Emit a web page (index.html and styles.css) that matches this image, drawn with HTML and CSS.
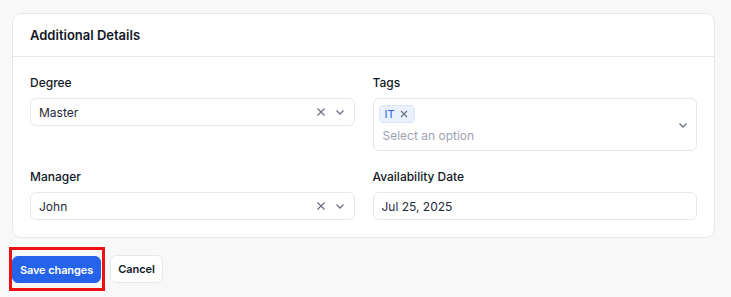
FILE: index.html
```html
<!DOCTYPE html>
<html>
<head>
<meta charset="utf-8">
<title>Additional Details</title>
<link rel="stylesheet" href="styles.css">
</head>
<body>
<div class="page">
    <div class="card">
        <div class="card-head">Additional Details</div>
        <div class="card-body">
            <div class="field">
                <div class="label">Degree</div>
                <div class="select">
                    <span class="value">Master</span>
                    <span class="icons">
                        <svg class="clear" width="10" height="10" viewBox="0 0 10 10"><path d="M1.5 1.5l7 7M8.5 1.5l-7 7" stroke="#6b7280" stroke-width="1.3" fill="none"/></svg>
                        <svg class="chev" width="10" height="10" viewBox="0 0 10 10"><path d="M1.5 3.5l3.5 3.5 3.5-3.5" stroke="#6b7280" stroke-width="1.3" fill="none"/></svg>
                    </span>
                </div>
            </div>
            <div class="field">
                <div class="label">Tags</div>
                <div class="select multi">
                    <div class="multi-inner">
                        <span class="chip">IT <svg width="8" height="8" viewBox="0 0 8 8"><path d="M1 1l6 6M7 1l-6 6" stroke="#6b7280" stroke-width="1.2" fill="none"/></svg></span>
                        <span class="placeholder">Select an option</span>
                    </div>
                    <span class="icons">
                        <svg class="chev" width="10" height="10" viewBox="0 0 10 10"><path d="M1.5 3.5l3.5 3.5 3.5-3.5" stroke="#6b7280" stroke-width="1.3" fill="none"/></svg>
                    </span>
                </div>
            </div>
            <div class="field">
                <div class="label">Manager</div>
                <div class="select">
                    <span class="value">John</span>
                    <span class="icons">
                        <svg class="clear" width="10" height="10" viewBox="0 0 10 10"><path d="M1.5 1.5l7 7M8.5 1.5l-7 7" stroke="#6b7280" stroke-width="1.3" fill="none"/></svg>
                        <svg class="chev" width="10" height="10" viewBox="0 0 10 10"><path d="M1.5 3.5l3.5 3.5 3.5-3.5" stroke="#6b7280" stroke-width="1.3" fill="none"/></svg>
                    </span>
                </div>
            </div>
            <div class="field">
                <div class="label">Availability Date</div>
                <div class="select">
                    <span class="value">Jul 25, 2025</span>
                </div>
            </div>
        </div>
    </div>
    <div class="actions">
        <div class="highlight">
            <button class="btn btn-primary">Save changes</button>
        </div>
        <button class="btn btn-default">Cancel</button>
    </div>
</div>
</body>
</html>
```
FILE: styles.css
```css
* {
    box-sizing: border-box;
}

body {
    margin: 0;
    background: #f8f8f8;
    font-family: Inter, "Noto Sans", sans-serif;
    font-size: 12px;
    color: #1f2937;
}

.page {
    padding: 13px 16px 0 12px;
}

.card {
    background: #fff;
    border: 1px solid #e5e7eb;
    border-radius: 9px;
}

.card-head {
    height: 43px;
    line-height: 42px;
    padding: 0 17px;
    font-size: 13px;
    font-weight: 600;
    color: #111827;
    border-bottom: 1px solid #e5e7eb;
}

.card-body {
    display: grid;
    grid-template-columns: 1fr 1fr;
    column-gap: 18px;
    row-gap: 18px;
    padding: 18px 17px 17px 17px;
}

.field {
    display: flex;
    flex-direction: column;
    gap: 7px;
}

.label {
    font-weight: 500;
    line-height: 16px;
    color: #111827;
}

.select {
    display: flex;
    align-items: center;
    height: 28px;
    padding: 0 9px 0 8px;
    border: 1px solid #e5e7eb;
    border-radius: 6px;
    background: #fff;
}

.select .value {
    flex: 1;
}

.icons {
    display: flex;
    align-items: center;
    gap: 9px;
}

.icons svg {
    display: block;
}

.select.multi {
    height: 53px;
    padding: 5px 8px 5px 5px;
}

.multi-inner {
    flex: 1;
    display: flex;
    flex-direction: column;
    align-items: flex-start;
    gap: 4px;
}

.chip {
    display: inline-flex;
    align-items: center;
    gap: 5px;
    height: 18px;
    padding: 0 6px 0 5px;
    background: #eaf1fe;
    border: 1px solid #dbe6fb;
    border-radius: 4px;
    color: #2563eb;
    font-size: 11px;
}

.placeholder {
    padding-left: 4px;
    line-height: 18px;
    color: #9ca3af;
}

.actions {
    display: flex;
    align-items: center;
    gap: 5px;
    padding-top: 9px;
}

/* red annotation frame round the primary button */
.highlight {
    display: flex;
    margin-left: -3px;
    padding: 6px 1px 5px 0;
    border: 3px solid #ee1111;
}

.btn {
    font-family: inherit;
    font-size: 11px;
    font-weight: 600;
    letter-spacing: -0.1px;
    border-radius: 6px;
    cursor: pointer;
}

.btn-primary {
    height: 27px;
    width: 89px;
    padding: 0;
    background: #2563eb;
    border: 1px solid #2563eb;
    color: #fff;
}

.btn-default {
    height: 28px;
    width: 53px;
    padding: 0;
    background: #fff;
    border: 1px solid #e5e7eb;
    color: #111827;
}
```
